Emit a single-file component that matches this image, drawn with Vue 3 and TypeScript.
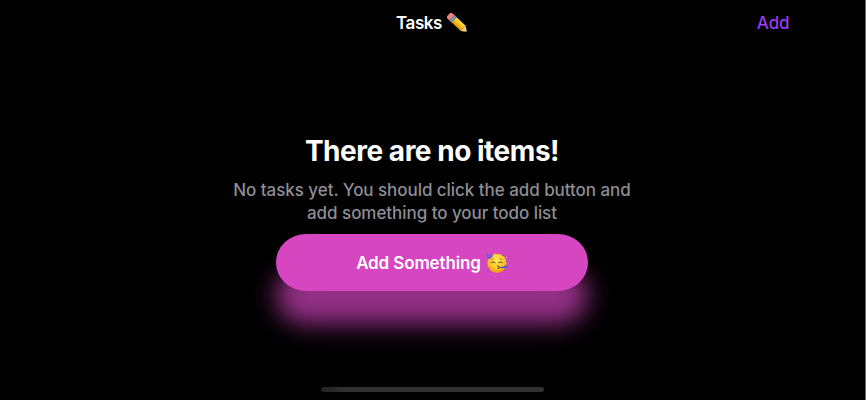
<script setup lang="ts">
import { ref } from 'vue'

const title = ref<string>('Tasks')
const lines = ref<string[]>([
  'No tasks yet. You should click the add button and',
  'add something to your todo list',
])
</script>

<template>
  <div class="screen">
    <header class="nav">
      <h1 class="nav-title">
        <span>{{ title }}</span>
        <svg class="pencil" viewBox="0 0 22 20" aria-hidden="true">
          <defs>
            <linearGradient id="wood" x1="0" y1="0" x2="0" y2="1">
              <stop offset="0" stop-color="#ffe04a" />
              <stop offset=".5" stop-color="#fcc21b" />
              <stop offset="1" stop-color="#d98c0c" />
            </linearGradient>
          </defs>
          <g transform="translate(3 3) rotate(43)">
            <path d="M0-3.6h2.6v7.2H0a2 2 0 0 1-2-2v-3.2a2 2 0 0 1 2-2z" fill="#ee7f86" />
            <rect x="2.6" y="-3.7" width="3.2" height="7.4" fill="#8ba3b8" />
            <path d="M3.7-3.7v7.4M5-3.7v7.4" stroke="#566f86" stroke-width=".5" />
            <rect x="5.8" y="-3.6" width="12.2" height="7.2" fill="url(#wood)" />
            <path d="M18-3.6l5.4 3.6-5.4 3.6z" fill="#f0cf91" />
            <path d="M21.8-1l1.6 1-1.6 1z" fill="#55483a" />
          </g>
        </svg>
      </h1>
      <button class="nav-add">Add</button>
    </header>

    <main class="empty">
      <h2 class="heading">There are no items!</h2>
      <p class="message">
        <span v-for="(line, i) in lines" :key="i">{{ line }}</span>
      </p>
      <button class="cta">
        <span>Add Something</span>
        <svg class="party" viewBox="0 0 22 22" aria-hidden="true">
          <defs>
            <radialGradient id="face" cx=".5" cy=".35" r=".65">
              <stop offset="0" stop-color="#ffe95a" />
              <stop offset=".6" stop-color="#fcc829" />
              <stop offset="1" stop-color="#ee9418" />
            </radialGradient>
          </defs>
          <circle cx="11" cy="11.4" r="9.6" fill="url(#face)" />
          <path d="M.5 1.2l6.6 2.2c-.6 1.6-2.5 3.2-4.6 3.8z" fill="#5b58c9" />
          <path d="M2.2 1.8L2.9 5.8M4.4 2.5l.3 3" stroke="#8a7be6" stroke-width=".7" />
          <path d="M5.2 10.7q2-1.8 3.9 0M12.6 10.7q2-1.8 3.8 0" fill="none" stroke="#6c3d12" stroke-width="1" stroke-linecap="round" />
          <path d="M5 7.8q1.6-1.4 3-1.1M13.4 6.7q1.8-.2 3 1.1" fill="none" stroke="#a8701a" stroke-width=".7" stroke-linecap="round" />
          <path d="M11.2 13.6q2 .3 1 1.5 1.3.6.1 1.7" fill="none" stroke="#7a3c16" stroke-width="1" />
          <path d="M12.4 15l6-.5 1.2 1.8-6.8-.2z" fill="#4d58b5" />
          <circle cx="19.9" cy="14.6" r="1.7" fill="#5361c4" />
          <path d="M11.2 1.2l1.2.5M18.6 1.6l1 .8M2.2 15.6l.8.9M18.7 19l.9-.6" stroke="#e44354" stroke-width="1.2" />
          <path d="M16.2 3.2l1.4.5M1.7 19.4l1-.6M20.4 8.4v1.2" stroke="#4d67cf" stroke-width="1.1" />
          <path d="M9 1.4l.9.5M20 5l.6 1" stroke="#f4bf3a" stroke-width="1" />
        </svg>
      </button>
    </main>

    <div class="home-indicator"></div>
  </div>
</template>

<style>
body {
  margin: 0;
  background: #fff;
}
</style>

<style scoped>
.screen {
  box-sizing: border-box;
  width: 866px;
  height: 400px;
  display: flex;
  flex-direction: column;
  align-items: center;
  overflow: hidden;
  background: #000;
  border-right: 1px solid #6b6b6b;
  font-family: Inter, "Liberation Sans", sans-serif;
  color: #fff;
}

button {
  border: 0;
  padding: 0;
  background: none;
  font: inherit;
  color: inherit;
}

.nav {
  width: 100%;
  height: 46px;
  display: grid;
  grid-template-columns: 1fr auto 1fr;
  align-items: center;
}

.nav-title {
  grid-column: 2;
  margin: 0;
  display: flex;
  align-items: center;
  gap: 5px;
  font-size: 17px;
  font-weight: 600;
  line-height: 22px;
  letter-spacing: -0.4px;
}

.pencil {
  width: 22px;
  height: 20px;
}

.nav-add {
  justify-self: end;
  margin-right: 75.5px;
  color: #9a3cf5;
  font-size: 17px;
  font-weight: 500;
  line-height: 22px;
  letter-spacing: -0.1px;
}

.empty {
  display: flex;
  flex-direction: column;
  align-items: center;
  padding-top: 88px;
  padding-right: 1px;
}

.heading {
  margin: 0;
  font-size: 28px;
  font-weight: 700;
  line-height: 34px;
  letter-spacing: -0.48px;
  white-space: nowrap;
}

.message {
  margin: 11px 0 0;
  display: flex;
  flex-direction: column;
  align-items: center;
  color: #8e8d93;
  font-size: 17px;
  font-weight: 500;
  line-height: 22.5px;
  letter-spacing: -0.05px;
  white-space: nowrap;
}

.cta {
  width: 312px;
  height: 57px;
  margin-top: 10px;
  display: flex;
  align-items: center;
  justify-content: center;
  gap: 5px;
  border-radius: 30px / 28.5px;
  background: #d646c0;
  box-shadow: 0 33px 25px 0 rgba(214, 70, 192, 0.69);
  font-size: 17px;
  font-weight: 600;
  line-height: 22px;
  letter-spacing: -0.12px;
}

.party {
  width: 22px;
  height: 22px;
}

.home-indicator {
  width: 223px;
  height: 5px;
  margin-top: auto;
  margin-bottom: 8px;
  border-radius: 3px;
  background: linear-gradient(90deg, #222, #303030 10%, #303030);
}
</style>
